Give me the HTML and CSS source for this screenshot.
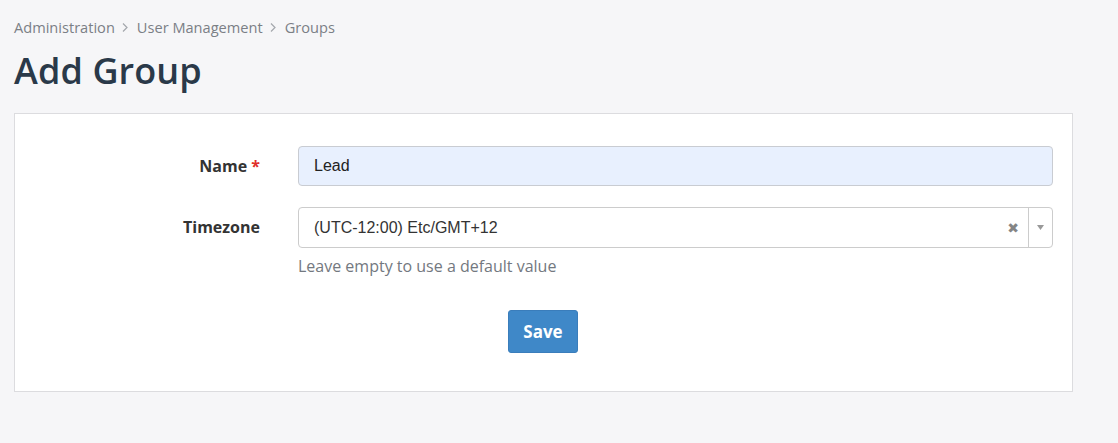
FILE: index.html
```html
<!DOCTYPE html>
<html>
<head>
<meta charset="utf-8">
<link rel="stylesheet" href="styles.css">
</head>
<body>
<nav class="crumbs">
  <span>Administration</span><span class="sep"><svg width="6" height="9" viewBox="0 0 6 9"><path d="M1 0.5L5 4.5L1 8.5" fill="none" stroke="#a3a7ad" stroke-width="1.2"/></svg></span><span>User Management</span><span class="sep"><svg width="6" height="9" viewBox="0 0 6 9"><path d="M1 0.5L5 4.5L1 8.5" fill="none" stroke="#a3a7ad" stroke-width="1.2"/></svg></span><span>Groups</span>
</nav>
<h1 class="title">Add Group</h1>
<div class="panel">
  <div class="row">
    <label class="lbl">Name <span class="req">*</span></label>
    <div class="field">
      <div class="input filled">Lead</div>
    </div>
  </div>
  <div class="row row-tz">
    <label class="lbl">Timezone</label>
    <div class="field">
      <div class="select">
        <span class="sel-text">(UTC-12:00) Etc/GMT+12</span>
        <span class="clear">&#x2716;</span>
        <span class="arrow"><svg width="7" height="5" viewBox="0 0 7 5"><path d="M0 0h7L3.5 5z" fill="#999"/></svg></span>
      </div>
      <div class="help">Leave empty to use a default value</div>
    </div>
  </div>
  <div class="actions">
    <button class="btn">Save</button>
  </div>
</div>
</body>
</html>
```

FILE: styles.css
```css
html, body {
  margin: 0;
  padding: 0;
  background: #f6f6f8;
}
body {
  font-family: "Open Sans", "Liberation Sans", sans-serif;
  padding: 0 14px;
  color: #333;
}
.crumbs {
  padding-top: 16px;
  font-size: 14.6px;
  line-height: 22px;
  color: #7b7f86;
  display: flex;
  align-items: center;
}
.crumbs .sep {
  display: inline-flex;
  align-items: center;
  margin: 1px 9px 0 7px;
}
.title {
  margin: 10px 0 0 0;
  font-size: 36px;
  line-height: 46px;
  font-weight: 600;
  color: #2a3949;
  letter-spacing: 0.1px;
}
.panel {
  margin-top: 19px;
  box-sizing: border-box;
  width: 1059px;
  background: #fff;
  border: 1px solid #dcdcdf;
  padding: 32px 19px 38px 0;
}
.row {
  display: grid;
  grid-template-columns: 245px 1fr;
  column-gap: 38px;
  align-items: start;
}
.row-tz {
  margin-top: 21px;
}
.lbl {
  text-align: right;
  font-weight: 700;
  font-size: 16px;
  color: #333;
  line-height: 40px;
}
.req {
  color: #e0302a;
}
.input, .select {
  box-sizing: border-box;
  border: 1px solid #cccccc;
  border-radius: 4px;
  font-family: "Liberation Sans", Arial, sans-serif;
  font-size: 16px;
  color: #222;
}
.input {
  height: 40px;
  line-height: 38px;
  padding: 0 15px;
}
.input.filled {
  background: #e8f0fe;
  border-color: #c9ccd2;
}
.select {
  height: 41px;
  display: flex;
  align-items: center;
  background: #fff;
  padding-left: 15px;
  color: #333;
}
.sel-text {
  flex: 1;
}
.clear {
  color: #858585;
  font-size: 14px;
  width: 30px;
  text-align: center;
  font-family: "DejaVu Sans", sans-serif;
}
.arrow {
  width: 23px;
  height: 39px;
  border-left: 1px solid #cccccc;
  display: flex;
  align-items: center;
  justify-content: center;
}
.help {
  margin-top: 6px;
  font-size: 16px;
  line-height: 24px;
  color: #737880;
}
.actions {
  margin-top: 32px;
  padding-left: 18px;
  display: flex;
  justify-content: center;
}
.btn {
  width: 70px;
  height: 43px;
  background: #3f88c8;
  border: 1px solid #3a7dbb;
  border-radius: 3px;
  color: #fff;
  font-family: "Open Sans", sans-serif;
  font-weight: 700;
  font-size: 17px;
  padding: 0;
}
```
